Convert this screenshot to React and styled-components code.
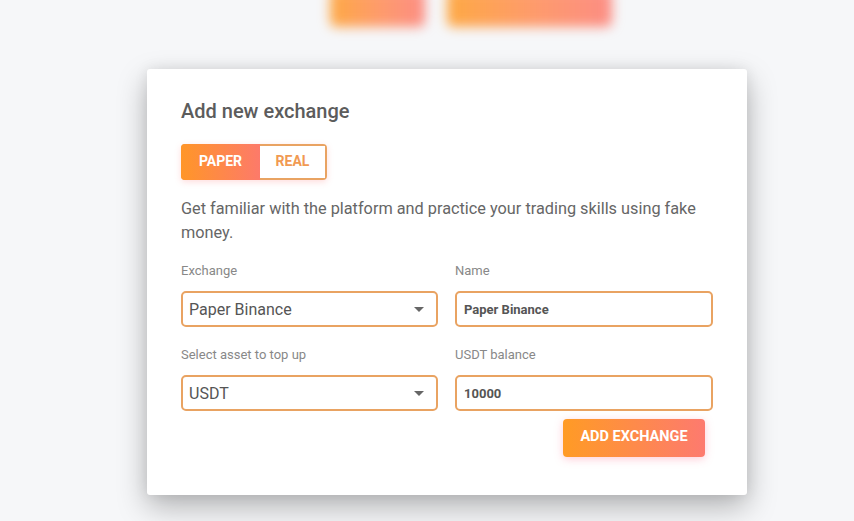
import styled, { createGlobalStyle } from 'styled-components'

const GlobalStyle = createGlobalStyle`
  html, body {
    margin: 0;
    padding: 0;
    background: #f6f7f9;
    font-family: Roboto, "Liberation Sans", sans-serif;
  }
`

const App = () => (
  <Page>
    <GlobalStyle />
    <Behind>
      <GhostButton $width={95} />
      <GhostButton $width={165} />
    </Behind>
    <Modal>
      <Title>Add new exchange</Title>
      <Toggle>
        <ToggleOption $active>PAPER</ToggleOption>
        <ToggleOption>REAL</ToggleOption>
      </Toggle>
      <Description>
        Get familiar with the platform and practice your trading skills using fake money.
      </Description>
      <Grid>
        <Field>
          <Label>Exchange</Label>
          <Select>
            <span>Paper Binance</span>
            <Caret />
          </Select>
        </Field>
        <Field>
          <Label>Name</Label>
          <Input defaultValue="Paper Binance" />
        </Field>
        <Field>
          <Label>Select asset to top up</Label>
          <Select>
            <span>USDT</span>
            <Caret />
          </Select>
        </Field>
        <Field>
          <Label>USDT balance</Label>
          <Input defaultValue="10000" />
        </Field>
      </Grid>
      <Actions>
        <PrimaryButton>ADD EXCHANGE</PrimaryButton>
      </Actions>
    </Modal>
  </Page>
)

const orange = 'linear-gradient(90deg, #ff9b25 0%, #ff8a55 55%, #fd7a6f 100%)'

const Page = styled.div`
  height: 521px;
  overflow: hidden;
  background: #f6f7f9;
`

const Behind = styled.div`
  display: flex;
  gap: 22px;
  padding-left: 330px;
  height: 27px;
  filter: blur(6px);
`

const GhostButton = styled.div`
  width: ${(p) => p.$width}px;
  height: 38px;
  margin-top: -11px;
  border-radius: 6px;
  background: ${orange};
  opacity: 0.85;
`

const Modal = styled.div`
  width: 600px;
  box-sizing: border-box;
  margin: 42px 0 0 147px;
  padding: 30px 34px 38px;
  background: #fff;
  border-radius: 3px;
  box-shadow: 0 12px 30px rgba(0, 0, 0, 0.28), 0 0 14px rgba(0, 0, 0, 0.08);
`

const Title = styled.h2`
  margin: 0;
  font-size: 20px;
  line-height: 24px;
  font-weight: 500;
  color: #5c5c5c;
`

const Toggle = styled.div`
  display: inline-flex;
  margin-top: 21px;
  height: 36px;
  border: 2px solid #e9a362;
  border-radius: 4px;
  box-sizing: border-box;
  box-shadow: 0 2px 6px rgba(255, 120, 120, 0.25);
`

const ToggleOption = styled.div`
  display: flex;
  align-items: center;
  justify-content: center;
  padding: 0 0 3px;
  margin: ${(p) => (p.$active ? '-2px 0 -2px -2px' : '0')};
  border-radius: ${(p) => (p.$active ? '4px 0 0 4px' : '0')};
  background: ${(p) => (p.$active ? 'linear-gradient(90deg, #ff9628 0%, #fd7a6a 100%)' : '#fff')};
  color: ${(p) => (p.$active ? '#fff' : '#f19a52')};
  font-size: 14px;
  font-weight: 700;
  width: ${(p) => (p.$active ? 79 : 65)}px;
  box-sizing: border-box;
`

const Description = styled.p`
  margin: 17px 0 0;
  font-size: 16.3px;
  line-height: 24px;
  color: #666;
`

const Grid = styled.div`
  display: grid;
  grid-template-columns: 257px 258px;
  column-gap: 17px;
  row-gap: 20px;
  margin-top: 18px;
`

const Field = styled.div`
  display: flex;
  flex-direction: column;
  gap: 12px;
`

const Label = styled.label`
  font-size: 13px;
  line-height: 16px;
  color: #888;
`

const Select = styled.div`
  display: flex;
  align-items: center;
  justify-content: space-between;
  height: 36px;
  box-sizing: border-box;
  padding: 0 12px 0 6px;
  border: 2px solid #e9a362;
  border-radius: 5px;
  font-size: 16px;
  color: #555;
`

const Caret = styled.span`
  width: 0;
  height: 0;
  border-left: 5px solid transparent;
  border-right: 5px solid transparent;
  border-top: 5px solid #666;
`

const Input = styled.input`
  height: 36px;
  box-sizing: border-box;
  padding: 0 7px;
  border: 2px solid #e9a362;
  border-radius: 5px;
  font-family: Roboto, "Liberation Sans", sans-serif;
  font-size: 13px;
  font-weight: 700;
  color: #555;
  outline: none;
`

const Actions = styled.div`
  display: flex;
  justify-content: flex-end;
  margin-top: 8px;
  padding-right: 8px;
`

const PrimaryButton = styled.button`
  height: 38px;
  width: 142px;
  padding: 0 0 4px;
  border: none;
  border-radius: 4px;
  background: linear-gradient(90deg, #ff9b25 0%, #fd7a6f 100%);
  color: #fff;
  font-family: Roboto, "Liberation Sans", sans-serif;
  font-size: 14.5px;
  font-weight: 700;
  box-shadow: 0 2px 8px rgba(255, 110, 140, 0.35);
`

export default App
